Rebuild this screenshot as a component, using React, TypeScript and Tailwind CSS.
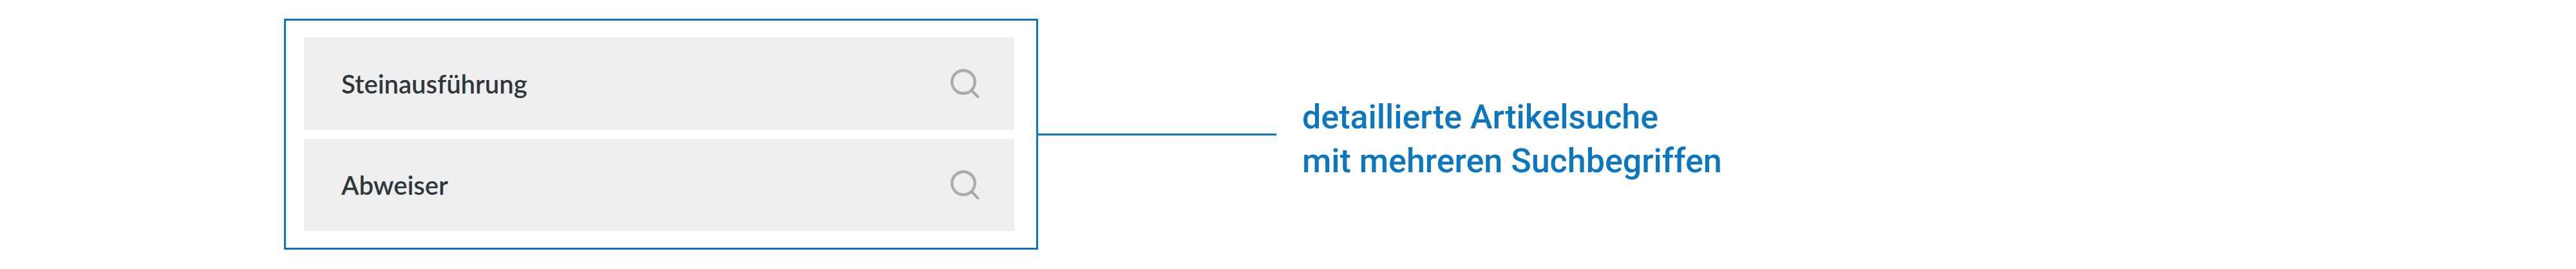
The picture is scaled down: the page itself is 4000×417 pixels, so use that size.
const fields = ["Steinausführung", "Abweiser"];

function SearchIcon() {
  return (
    <svg
      viewBox="0 0 46 46"
      className="size-[46px]"
      fill="none"
      stroke="currentColor"
      strokeWidth="4.4"
      strokeLinecap="round"
      aria-hidden="true"
    >
      <circle cx="20" cy="20" r="17.8" />
      <path d="M33 33.5 L42.2 43" />
    </svg>
  );
}

function SearchField({ name }: { name: string }) {
  return (
    <div className="flex items-center bg-[#efefef] h-[143px] pl-[58px] pr-[53px]">
      <input
        type="text"
        aria-label={name}
        placeholder={name}
        className="min-w-0 flex-1 bg-transparent font-['Lato',sans-serif] text-[40px] font-semibold text-[#2d383c] placeholder:text-[#2d383c] outline-none"
      />
      <button type="button" aria-label={`${name} suchen`} className="text-[#ababab]">
        <SearchIcon />
      </button>
    </div>
  );
}

export default function App() {
  return (
    <main className="grid grid-cols-[441fr_1171fr_370fr_2018fr] items-center bg-white py-[29px] font-['Roboto',sans-serif]">
      <form className="col-start-2 flex flex-col gap-[14px] border-3 border-[#0c77be] pt-[26px] pr-[34px] pb-[26px] pl-[28px]">
        {fields.map((name) => (
          <SearchField key={name} name={name} />
        ))}
      </form>
      <div className="h-[3px] bg-[#0c77be]" />
      <p className="pt-4 pl-10 text-[52px] leading-[68px] font-medium text-[#0c77be]">
        detaillierte Artikelsuche
        <br />
        mit mehreren Suchbegriffen
      </p>
    </main>
  );
}
